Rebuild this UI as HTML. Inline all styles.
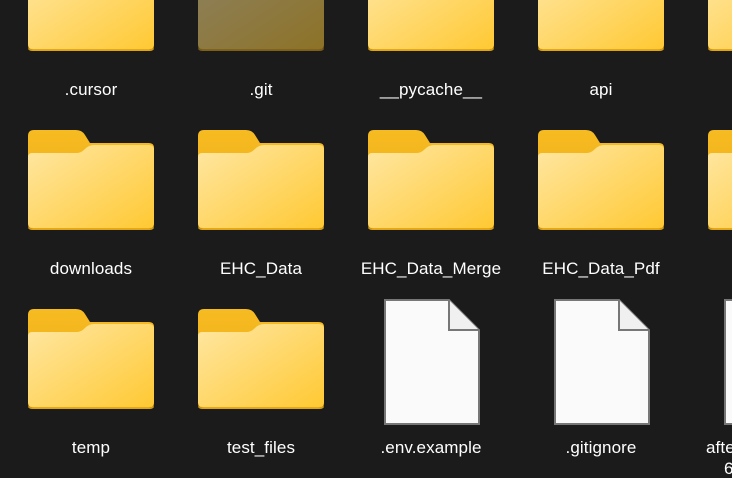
<!DOCTYPE html>
<html><head><meta charset="utf-8"><style>
html,body{margin:0;padding:0;background:#1b1b1b;width:732px;height:478px;overflow:hidden;font-family:"Liberation Sans",sans-serif;}
#w{position:relative;width:732px;height:478px;overflow:hidden;}
.ic{position:absolute;}
.lb{position:absolute;width:170px;text-align:center;color:#fff;font-size:17px;letter-spacing:0.1px;line-height:20px;white-space:nowrap;}
</style></head><body><div id="w">
<svg width="0" height="0" style="position:absolute">
<defs>
<linearGradient id="gf" x1="0" y1="0" x2="1" y2="1">
<stop offset="0" stop-color="#ffe7a3"/><stop offset="1" stop-color="#ffc933"/>
</linearGradient>
<linearGradient id="gb" x1="0" y1="0" x2="0" y2="1">
<stop offset="0" stop-color="#f7bb22"/><stop offset="1" stop-color="#e9a812"/>
</linearGradient>
<symbol id="fold" viewBox="0 0 126 100">
<path d="M0,6 Q0,0 6,0 L48,0 Q54,0 57,5 L62,13 L121,13 Q126,13 126,18 L126,94 Q126,99 121,99 L5,99 Q0,99 0,94 Z" fill="url(#gb)"/>
<path d="M0,27 Q0,23 4,23 L49,23 Q53,23 57,19 Q61,15 66,15 L121,15 Q126,15 126,20 L126,93 Q126,98 121,98 L5,98 Q0,98 0,93 Z" fill="url(#gf)"/>
<path d="M0,95 Q0,99 5,99 L121,99 Q126,99 126,95 L126,97 Q126,100 121,100 L5,100 Q0,100 0,97 Z" fill="#e0a516"/>
</symbol>
<symbol id="file" viewBox="0 0 96 126">
<path d="M1,1 L65,1 L95,31 L95,125 L1,125 Z" fill="#fafafa" stroke="#777" stroke-width="2"/>
<path d="M65,1 L65,31 L95,31" fill="#f0f0f0" stroke="#777" stroke-width="2"/>
</symbol>
</defs></svg>

<svg class="ic" style="left:28px;top:-49px" width="126" height="100"><use href="#fold"/></svg>
<svg class="ic" style="left:198px;top:-49px;opacity:0.5" width="126" height="100"><use href="#fold"/></svg>
<svg class="ic" style="left:368px;top:-49px" width="126" height="100"><use href="#fold"/></svg>
<svg class="ic" style="left:538px;top:-49px" width="126" height="100"><use href="#fold"/></svg>
<svg class="ic" style="left:708px;top:-49px" width="24" height="100" viewBox="0 0 24 100" preserveAspectRatio="xMinYMin slice"><svg width="126" height="100"><use href="#fold"/></svg></svg>
<div class="lb" style="left:6px;top:80px">.cursor</div>
<div class="lb" style="left:176px;top:80px">.git</div>
<div class="lb" style="left:346px;top:80px">__pycache__</div>
<div class="lb" style="left:516px;top:80px">api</div>

<svg class="ic" style="left:28px;top:130px" width="126" height="100"><use href="#fold"/></svg>
<svg class="ic" style="left:198px;top:130px" width="126" height="100"><use href="#fold"/></svg>
<svg class="ic" style="left:368px;top:130px" width="126" height="100"><use href="#fold"/></svg>
<svg class="ic" style="left:538px;top:130px" width="126" height="100"><use href="#fold"/></svg>
<svg class="ic" style="left:708px;top:130px" width="24" height="100"><svg width="126" height="100"><use href="#fold"/></svg></svg>
<div class="lb" style="left:6px;top:259px">downloads</div>
<div class="lb" style="left:176px;top:259px">EHC_Data</div>
<div class="lb" style="left:346px;top:259px">EHC_Data_Merge</div>
<div class="lb" style="left:516px;top:259px">EHC_Data_Pdf</div>

<svg class="ic" style="left:28px;top:309px" width="126" height="100"><use href="#fold"/></svg>
<svg class="ic" style="left:198px;top:309px" width="126" height="100"><use href="#fold"/></svg>
<svg class="ic" style="left:384px;top:299px" width="96" height="126"><use href="#file"/></svg>
<svg class="ic" style="left:554px;top:299px" width="96" height="126"><use href="#file"/></svg>
<svg class="ic" style="left:724px;top:299px" width="8" height="126"><svg width="96" height="126"><use href="#file"/></svg></svg>
<div class="lb" style="left:6px;top:438px">temp</div>
<div class="lb" style="left:176px;top:438px">test_files</div>
<div class="lb" style="left:346px;top:438px">.env.example</div>
<div class="lb" style="left:516px;top:438px">.gitignore</div>
<div class="lb" style="left:706px;top:438px;width:26px;overflow:hidden;text-align:left">after</div>
<div class="lb" style="left:724px;top:459px;width:8px;overflow:hidden;text-align:left">6</div>
</div></body></html>
